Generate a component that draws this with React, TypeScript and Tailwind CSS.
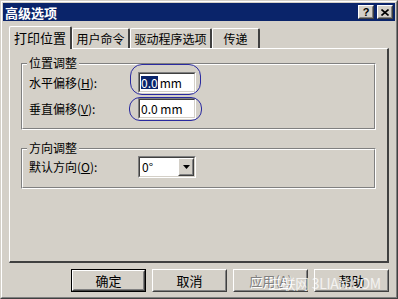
const font = { fontFamily: '"Noto Sans CJK SC", "Liberation Sans", sans-serif' };

function Raised({ children, className = "" }: { children?: React.ReactNode; className?: string }) {
  return (
    <div className={`border border-t-white border-l-white border-r-[#404040] border-b-[#404040] ${className}`}>
      <div className="w-full h-full border border-t-[#d4d0c8] border-l-[#d4d0c8] border-r-[#808080] border-b-[#808080] flex items-center justify-center">
        {children}
      </div>
    </div>
  );
}

function Sunken({ children, className = "" }: { children?: React.ReactNode; className?: string }) {
  return (
    <div className={`border border-t-[#808080] border-l-[#808080] border-r-white border-b-white ${className}`}>
      <div className="w-full h-full border border-t-[#404040] border-l-[#404040] border-r-[#d4d0c8] border-b-[#d4d0c8] bg-white flex items-center">
        {children}
      </div>
    </div>
  );
}

function Group({ title, children, className = "" }: { title: string; children: React.ReactNode; className?: string }) {
  return (
    <div className={`relative border border-t-[#808080] border-l-[#808080] border-r-white border-b-white ${className}`}>
      <div className="w-full h-full border border-t-white border-l-white border-r-[#808080] border-b-[#808080]">
        <span className="absolute -top-[9px] left-[5px] bg-[#d4d0c8] px-[2px] text-[12px] leading-[16px] text-black">{title}</span>
        {children}
      </div>
    </div>
  );
}

function Tab({ label, active, className = "" }: { label: string; active?: boolean; className?: string }) {
  return (
    <div
      className={`flex items-center justify-center border-l border-t border-white border-r-2 border-r-[#404040] rounded-t-[2px] bg-[#d4d0c8] text-black ${
        active ? "h-[23px] text-[13px] -mb-[1px] relative z-10" : "h-[20px] text-[12px]"
      } ${className}`}
    >
      {label}
    </div>
  );
}

export default function App() {
  return (
    <div className="w-[398px] h-[299px] bg-[#d4d0c8] relative overflow-hidden" style={font}>
      <div className="w-full h-full border border-t-[#d4d0c8] border-l-[#d4d0c8] border-r-[#404040] border-b-[#404040]">
        <div className="w-full h-full border border-t-white border-l-white border-r-[#808080] border-b-[#808080] flex flex-col px-[1px] pt-[1px]">
          {/* title bar */}
          <div className="h-[18px] bg-[#0a246a] flex items-center justify-between pl-[2px] pr-[2px]">
            <span className="text-white font-bold text-[13px] leading-none">高级选项</span>
            <div className="flex gap-[2px]">
              <Raised className="w-[16px] h-[14px] bg-[#d4d0c8]">
                <span className="text-[11px] font-bold leading-none" style={{ fontFamily: '"Liberation Sans", sans-serif' }}>?</span>
              </Raised>
              <Raised className="w-[16px] h-[14px] bg-[#d4d0c8] ml-[1px]">
                <svg width="8" height="7" viewBox="0 0 8 7">
                  <path d="M0.5 0.5 L7.5 6.5 M7.5 0.5 L0.5 6.5" stroke="black" strokeWidth="1.6" />
                </svg>
              </Raised>
            </div>
          </div>

          {/* tabs */}
          <div className="flex items-end pl-[6px] mt-[4px] h-[23px]">
            <Tab label="打印位置" active className="w-[63px]" />
            <Tab label="用户命令" className="w-[58px]" />
            <Tab label="驱动程序选项" className="w-[82px]" />
            <Tab label="传递" className="w-[48px]" />
          </div>

          {/* panel */}
          <div className="ml-[6px] mr-[6px] h-[215px] border-l border-t border-white border-r-2 border-b-2 border-r-[#404040] border-b-[#404040] px-[11px] pt-[14px]">
            <Group title="位置调整" className="h-[67px]">
              <div className="flex flex-col pl-[6px] pt-[7px] gap-[5px] text-[12px]">
                <div className="flex items-center h-[21px]">
                  <span className="w-[109px]">水平偏移(<u>H</u>):</span>
                  <Sunken className="w-[58px] h-[21px]">
                    <span className="ml-[1px] bg-[#0a246a] text-white leading-[13px]">0.0</span>
                    <span className="ml-[2px] leading-none">mm</span>
                  </Sunken>
                </div>
                <div className="flex items-center h-[21px]">
                  <span className="w-[109px]">垂直偏移(<u>V</u>):</span>
                  <Sunken className="w-[58px] h-[21px]">
                    <span className="ml-[1px] leading-none">0.0 mm</span>
                  </Sunken>
                </div>
              </div>
            </Group>

            <Group title="方向调整" className="h-[41px] mt-[18px]">
              <div className="flex items-center pl-[6px] pt-[6px] text-[12px]">
                <span className="w-[109px]">默认方向(<u>O</u>):</span>
                <Sunken className="w-[58px] h-[22px]">
                  <span className="ml-[2px] flex-1 leading-none">0°</span>
                  <Raised className="w-[16px] h-[18px] bg-[#d4d0c8]">
                    <svg width="7" height="4" viewBox="0 0 7 4">
                      <path d="M0 0 H7 L3.5 4 Z" fill="black" />
                    </svg>
                  </Raised>
                </Sunken>
              </div>
            </Group>
          </div>

          {/* buttons */}
          <div className="flex justify-end gap-[6px] pr-[6px] mt-[6px] text-[13px]">
            <div className="border border-black">
              <Raised className="w-[73px] h-[21px] bg-[#d4d0c8]">确定</Raised>
            </div>
            <Raised className="w-[75px] h-[23px] bg-[#d4d0c8]">取消</Raised>
            <Raised className="w-[75px] h-[23px] bg-[#d4d0c8]">
              <span className="text-[#808080] [text-shadow:1px_1px_0_#fff]">应用(<u>A</u>)</span>
            </Raised>
            <Raised className="w-[75px] h-[23px] bg-[#d4d0c8]">帮助</Raised>
          </div>
        </div>
      </div>

      {/* highlight rings */}
      <div className="absolute left-[130px] top-[64px] w-[71px] h-[31px] rounded-[12px] border-[1.5px] border-[#2a2aa0] pointer-events-none" />
      <div className="absolute left-[129px] top-[97px] w-[73px] h-[24px] rounded-[11px] border-[1.5px] border-[#2a2aa0] pointer-events-none" />

      {/* watermark */}
      <div className="absolute left-[268px] top-[276px] text-white/75 text-[14px] leading-none tracking-tight pointer-events-none">
        三联网 3LIAN.COM
      </div>
    </div>
  );
}
